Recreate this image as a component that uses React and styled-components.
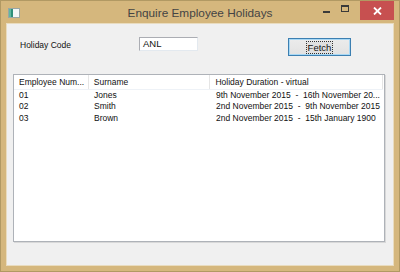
import styled, { createGlobalStyle } from "styled-components";

const GlobalStyle = createGlobalStyle`
  html, body {
    margin: 0;
    padding: 0;
    background: #d5b77d;
  }
  body {
    font-family: "Liberation Sans", Arial, sans-serif;
  }
`;

const rows = [
  { num: "01", surname: "Jones", duration: "9th November 2015  -  16th November 20..." },
  { num: "02", surname: "Smith", duration: "2nd November 2015  -  9th November 2015" },
  { num: "03", surname: "Brown", duration: "2nd November 2015  -  15th January 1900" },
];

const columns = [
  { title: "Employee Num...", width: 75 },
  { title: "Surname", width: 122 },
  { title: "Holiday Duration - virtual", width: 173 },
];

export default function App() {
  return (
    <>
      <GlobalStyle />
      <Frame>
        <TitleBar>
          <AppIcon>
            <svg width="12" height="10" viewBox="0 0 12 10">
              <rect x="0.5" y="0.5" width="11" height="9" fill="#f4f6f6" stroke="#9aa6a4" />
              <rect x="1" y="1" width="4" height="8" fill="#2f8f7a" />
              <rect x="1" y="1" width="2" height="8" fill="#5fb8a0" />
            </svg>
          </AppIcon>
          <Title>Enquire Employee Holidays</Title>
          <Controls>
            <CtrlButton>
              <svg width="8" height="8" viewBox="0 0 8 8">
                <rect x="0" y="6" width="7" height="2" fill="#3a3a3a" />
              </svg>
            </CtrlButton>
            <CtrlButton>
              <svg width="8" height="7" viewBox="0 0 8 7">
                <rect x="0.5" y="0.5" width="7" height="6" fill="none" stroke="#3a3a3a" />
                <rect x="0" y="0" width="8" height="2" fill="#3a3a3a" />
              </svg>
            </CtrlButton>
            <CloseButton>
              <svg width="9" height="8" viewBox="0 0 9 8">
                <path d="M1 0.5 L8 7.5 M8 0.5 L1 7.5" stroke="#fff" strokeWidth="1.8" />
              </svg>
            </CloseButton>
          </Controls>
        </TitleBar>
        <Client>
          <TopRow>
            <Label>Holiday Code</Label>
            <TextInput>ANL</TextInput>
            <Button>
              <FocusBox>Fetch</FocusBox>
            </Button>
          </TopRow>
          <ListView>
            <Header>
              {columns.map(c => (
                <HeaderCell key={c.title} $w={c.width}>{c.title}</HeaderCell>
              ))}
            </Header>
            {rows.map(r => (
              <Row key={r.num}>
                <Cell $w={columns[0].width}>{r.num}</Cell>
                <Cell $w={columns[1].width}>{r.surname}</Cell>
                <Cell $w={columns[2].width}>{r.duration}</Cell>
              </Row>
            ))}
          </ListView>
        </Client>
      </Frame>
    </>
  );
}

const Frame = styled.div`
  width: 400px;
  height: 272px;
  box-sizing: border-box;
  background: #d5b77d;
  border: 1px solid #b19963;
  display: flex;
  flex-direction: column;
`;

const TitleBar = styled.div`
  height: 22px;
  display: flex;
  align-items: center;
`;

const AppIcon = styled.div`
  width: 12px;
  height: 10px;
  margin-left: 7px;
  margin-top: 1px;
  display: flex;
`;

const Title = styled.div`
  flex: 1;
  text-align: center;
  font-size: 11.8px;
  color: #444;
  margin-top: 2px;
  padding-left: 60px;
`;

const Controls = styled.div`
  display: flex;
  align-self: flex-start;
  height: 19px;
  margin-right: 5px;
`;

const CtrlButton = styled.div`
  width: 14px;
  height: 15px;
  margin-right: 4px;
  display: flex;
  align-items: center;
  justify-content: center;
`;

const CloseButton = styled.div`
  width: 34px;
  height: 19px;
  margin-left: 4px;
  background: #c75050;
  display: flex;
  align-items: center;
  justify-content: center;
`;

const Client = styled.div`
  flex: 1;
  margin: 0 5px 5px 5px;
  background: #f0f0f0;
  border: 1px solid #e9dcbf;
  display: flex;
  flex-direction: column;
  font-size: 8.5px;
  color: #111;
`;

const TopRow = styled.div`
  height: 50px;
  display: flex;
  align-items: flex-start;
  padding-left: 13px;
`;

const Label = styled.div`
  width: 119px;
  margin-top: 16px;
`;

const TextInput = styled.div`
  width: 59px;
  height: 14px;
  box-sizing: border-box;
  margin-top: 13px;
  background: #fff;
  border: 1px solid #abadb3;
  border-color: #abadb3 #e3e9ef #e3e9ef #abadb3;
  padding-left: 3px;
  line-height: 12px;
  font-size: 9.5px;
`;

const Button = styled.div`
  width: 63px;
  height: 18px;
  box-sizing: border-box;
  margin-top: 14px;
  margin-left: 90px;
  border: 1px solid #3c7fb1;
  box-shadow: inset 0 0 0 1px #a8d8f5;
  background: linear-gradient(#ececec, #e2e2e2);
  display: flex;
  align-items: center;
  justify-content: center;
  font-size: 9.5px;
`;

const FocusBox = styled.span`
  outline: 1px dotted #333;
  padding: 0 1px;
  line-height: 11px;
  background: #e0e0e0;
`;

const ListView = styled.div`
  margin-left: 6px;
  width: 372px;
  height: 168px;
  box-sizing: border-box;
  background: #fff;
  border: 1px solid #aeb2b8;
  box-shadow: 1px 1px 0 #d8d8d8;
`;

const Header = styled.div`
  display: flex;
  height: 14px;
  border-bottom: 1px solid #eef2f7;
  margin-right: 1px;
`;

const HeaderCell = styled.div`
  width: ${p => p.$w}px;
  box-sizing: border-box;
  padding-left: 5px;
  line-height: 14px;
  border-right: 1px solid #e5e5e5;
  white-space: nowrap;
  overflow: hidden;
`;

const Row = styled.div`
  display: flex;
  height: 11.4px;
  line-height: 11.4px;
`;

const Cell = styled.div`
  width: ${p => p.$w}px;
  box-sizing: border-box;
  padding-left: 5px;
  white-space: pre;
  overflow: hidden;
`;
